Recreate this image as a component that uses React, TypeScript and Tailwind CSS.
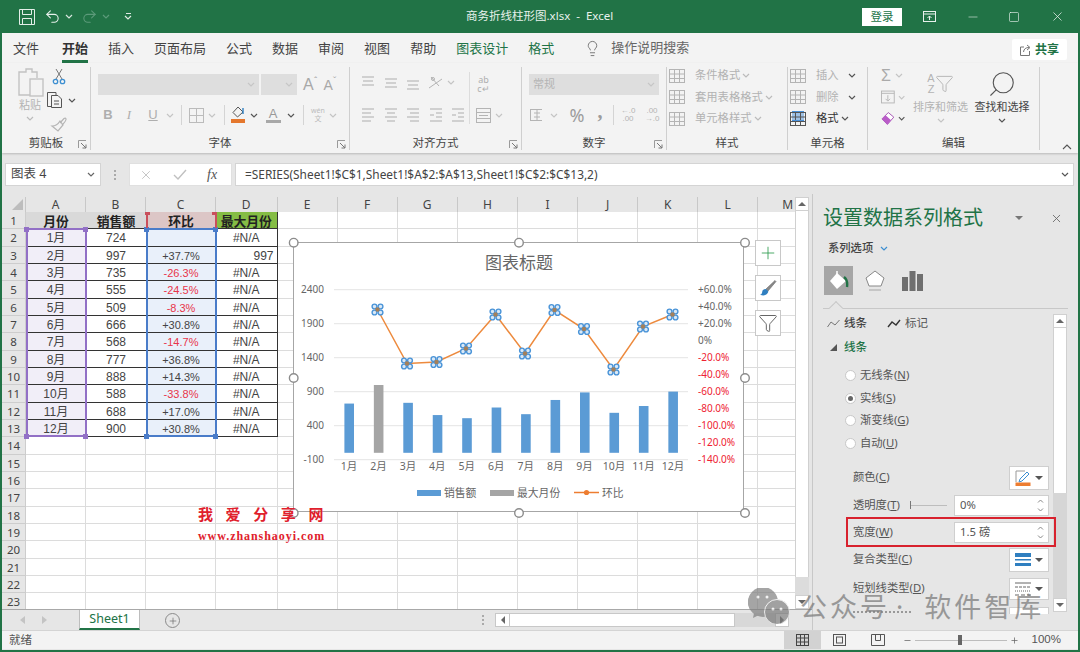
import React from 'react';
import { Undo2, Redo2, Lightbulb, X, Minus, Square, Plus, Filter, Search } from 'lucide-react';

const TABS = ['文件', '开始', '插入', '页面布局', '公式', '数据', '审阅', '视图', '帮助'];

const COLS = [
  'w-[60px]', 'w-[60px]', 'w-[70px]', 'w-[61.5px]', 'w-[60.1px]', 'w-[60.1px]', 'w-[60.1px]',
  'w-[60.1px]', 'w-[60.1px]', 'w-[60.1px]', 'w-[60.1px]', 'w-[60.1px]', 'w-[60.1px]'
];
const LETTERS = ['A', 'B', 'C', 'D', 'E', 'F', 'G', 'H', 'I', 'J', 'K', 'L', 'M'];

const TABLE = [
  ['1月', '724', '', '#N/A'],
  ['2月', '997', '+37.7%', '997'],
  ['3月', '735', '-26.3%', '#N/A'],
  ['4月', '555', '-24.5%', '#N/A'],
  ['5月', '509', '-8.3%', '#N/A'],
  ['6月', '666', '+30.8%', '#N/A'],
  ['7月', '568', '-14.7%', '#N/A'],
  ['8月', '777', '+36.8%', '#N/A'],
  ['9月', '888', '+14.3%', '#N/A'],
  ['10月', '588', '-33.8%', '#N/A'],
  ['11月', '688', '+17.0%', '#N/A'],
  ['12月', '900', '+30.8%', '#N/A']
];

const SALES = [724, 997, 735, 555, 509, 666, 568, 777, 888, 588, 688, 900];
const MONTHS = ['1月', '2月', '3月', '4月', '5月', '6月', '7月', '8月', '9月', '10月', '11月', '12月'];
const LINE: [number, number][] = [
  [377.5, 308.5], [407, 362.5], [436.5, 361], [466, 347.5], [495.5, 313.5], [525, 352.5],
  [554.5, 309], [584, 328], [613.5, 368.5], [643, 325.5], [672.5, 313.5]
];
const RIGHT_AXIS = ['+60.0%', '+40.0%', '+20.0%', '0%', '-20.0%', '-40.0%', '-60.0%', '-80.0%', '-100.0%', '-120.0%', '-140.0%'];
const HANDLES: [number, number][] = [
  [293.7, 241.7], [519, 241.7], [745, 241.7], [293.7, 377], [745, 377], [293.7, 512], [519, 512], [745, 512]
];

const DIM = '#b4b4b4';

function Chev({ c = '#a8a8a8', className = '' }: { c?: string; className?: string }) {
  return (
    <svg width="8" height="5" viewBox="0 0 8 5" className={className}>
      <polyline points="1,1 4,4 7,1" fill="none" stroke={c} strokeWidth="1.2" />
    </svg>
  );
}

// lines for the alignment buttons, given as [x1, x2, y]
function Lines({ rows }: { rows: [number, number, number][] }) {
  return (
    <svg width="16" height="16" viewBox="0 0 16 16">
      {rows.map(([a, b, y], i) => (
        <line key={i} x1={a} x2={b} y1={y} y2={y} stroke="#adadad" strokeWidth="1" />
      ))}
    </svg>
  );
}

function Launcher() {
  return (
    <svg width="9" height="9" viewBox="0 0 9 9">
      <path d="M0.5 8V0.5H8" fill="none" stroke="#9a9a9a" />
      <path d="M3 3L8 8M8 4.5V8H4.5" fill="none" stroke="#777" />
    </svg>
  );
}

function Group({ width, label, launcher, children }: { width: string; label: string; launcher?: boolean; children: React.ReactNode }) {
  return (
    <div className={`${width} h-[83px] my-[4px] border-r border-[#cfcfcf] flex flex-col shrink-0`}>
      <div className="h-[71px] flex">{children}</div>
      <div className="h-[14px] flex items-center relative">
        <span className="w-full text-center text-[11.5px] leading-none text-[#444]">{label}</span>
        {launcher && (
          <span className="absolute right-[3px] top-[4px]">
            <Launcher />
          </span>
        )}
      </div>
    </div>
  );
}

function Dropdown({ width, text }: { width: string; text?: string }) {
  return (
    <div className={`${width} h-[21px] bg-[#dedede] flex items-center justify-between px-[4px]`}>
      <span className="text-[11px] text-[#b4b4b4]">{text}</span>
      <Chev c="#c6c6c6" />
    </div>
  );
}

function Sep({ className = '' }: { className?: string }) {
  return <div className={`w-px h-[20px] bg-[#d4d4d4] ${className}`} />;
}

function StyleRow({ label, icon, chevron = true }: { label: string; icon: React.ReactNode; chevron?: boolean }) {
  return (
    <div className="h-[21.5px] flex items-center">
      <span className="w-[18px] flex justify-center">{icon}</span>
      <span className="ml-[9px] text-[11.3px] text-[#b2b2b2] whitespace-nowrap">{label}</span>
      {chevron && <Chev c="#bbb" className="ml-[2px]" />}
    </div>
  );
}

function TableIcon({ c = DIM, accent }: { c?: string; accent?: string }) {
  return (
    <svg width="16" height="16" viewBox="0 0 16 16">
      {accent && <rect x="2" y="0.5" width="12" height="9" fill={accent} opacity="0.5" />}
      <rect x="0.5" y="1.5" width="15" height="13" fill="none" stroke={c} />
      <path d="M0.5 6H15.5M0.5 10.5H15.5M5.5 1.5V14.5M10.5 1.5V14.5" stroke={c} fill="none" />
      {accent && <path d="M2 0.5H14M2 9.5H14" stroke={accent} />}
    </svg>
  );
}

function Ribbon() {
  return (
    <div className="h-[90px] bg-[#f3f3f3] flex shadow-[0_1px_2px_rgba(0,0,0,0.2)] relative z-10">
      <Group width="w-[89px]" label="剪贴板" launcher>
        <div className="w-[43px] pl-[13px] flex flex-col items-center">
          <svg width="27" height="30" viewBox="0 0 27 30" fill="none" stroke="#c2c2c2" strokeWidth="1.4">
            <path d="M4 5H9V2H15V5H20V11" />
            <path d="M13 28H2V5H4" />
            <rect x="13" y="12" width="13" height="17" fill="#f3f3f3" />
          </svg>
          <span className="text-[11px] leading-none mt-[2px] text-[#b4b4b4] whitespace-nowrap">粘贴</span>
          <Chev c="#bbb" className="mt-[6px]" />
        </div>
        <div className="ml-[2px] flex flex-col items-start pt-[1px]">
          <svg width="16" height="17" viewBox="0 0 16 17" className="ml-[4px]" fill="none">
            <path d="M5 1L11 11M11 1L5 11" stroke="#777" />
            <circle cx="4.5" cy="13.5" r="2.2" stroke="#3d8fd1" strokeWidth="1.3" />
            <circle cx="11.5" cy="13.5" r="2.2" stroke="#3d8fd1" strokeWidth="1.3" />
          </svg>
          <div className="flex items-center mt-[7px]">
            <svg width="17" height="16" viewBox="0 0 17 16" fill="none" stroke="#555">
              <path d="M4 14.5H0.5V0.5H9V3" />
              <path d="M4.5 3.5H11L14.5 7V15.5H4.5Z" />
              <path d="M7 9H12M7 12H12" />
            </svg>
            <Chev c="#555" className="ml-[4px]" />
          </div>
          <svg width="18" height="16" viewBox="0 0 18 16" className="ml-[3px] mt-[8px]" fill="none" stroke="#b4b4b4" strokeWidth="1.2">
            <path d="M10 7L14 2.5Q15.5 1.5 16 3T12 9" />
            <path d="M10 5L13 9L8 15L2 10Q7 10 10 5Z" />
          </svg>
        </div>
      </Group>

      <Group width="w-[259px]" label="字体" launcher>
        <div className="pl-[7px] pt-[7px] flex flex-col">
          <div className="flex items-center h-[21px]">
            <Dropdown width="w-[161px]" />
            <Dropdown width="w-[36px] ml-[2px]" />
            <span className="ml-[6px] text-[16px] leading-none text-[#a8a8a8] font-['Liberation_Sans',sans-serif]">A</span>
            <span className="text-[9px] leading-none text-[#a8a8a8] -mt-[8px]">ˆ</span>
            <span className="ml-[6px] text-[14px] leading-none text-[#a8a8a8] font-['Liberation_Sans',sans-serif]">A</span>
            <span className="text-[9px] leading-none text-[#a8a8a8] -mt-[8px]">ˇ</span>
          </div>
          <div className="flex items-center h-[18px] mt-[11px] text-[#aeaeae]">
            <span className="w-[20px] text-center text-[13px] font-bold font-['Liberation_Sans',sans-serif]">B</span>
            <span className="w-[22px] text-center text-[13px] italic font-['Liberation_Serif',serif]">I</span>
            <span className="w-[26px] text-center text-[13px] underline font-['Liberation_Sans',sans-serif]">U</span>
            <span className="w-[8px] flex justify-center"><Chev c="#c4c4c4" /></span>
            <span className="w-[14px] flex justify-center"><Sep /></span>
            <span className="w-[16px] flex justify-center">
              <svg width="15" height="15" viewBox="0 0 15 15" fill="none" stroke="#bbb">
                <rect x="0.5" y="0.5" width="14" height="14" />
                <path d="M7.5 0.5V14.5M0.5 7.5H14.5" />
              </svg>
            </span>
            <span className="w-[16px] flex justify-center"><Chev c="#c4c4c4" /></span>
            <span className="w-[8px] flex justify-center"><Sep /></span>
            <span className="w-[20px] flex justify-center">
              <svg width="16" height="18" viewBox="0 0 16 18">
                <path d="M8 1L13 6L7.5 11L3 6.5Z" fill="none" stroke="#555" />
                <path d="M13 2V8" stroke="#2f7fc0" strokeWidth="1.4" />
                <rect x="1" y="13" width="14" height="4" fill="#e4772d" />
              </svg>
            </span>
            <span className="w-[12px] flex justify-center"><Chev c="#555" /></span>
            <span className="w-[26px] flex flex-col items-center">
              <span className="text-[13px] leading-[13px] text-[#999] font-['Liberation_Sans',sans-serif]">A</span>
              <span className="w-[15px] h-[3px] bg-[#a8a8a8]" />
            </span>
            <span className="w-[10px] flex justify-center"><Chev c="#555" /></span>
            <span className="w-[14px] flex justify-center"><Sep /></span>
            <span className="w-[16px] flex flex-col items-center text-[7px] leading-[8px] text-[#bbb]">
              <span>wén</span>
              <span>文</span>
            </span>
            <span className="w-[14px] flex justify-center"><Chev c="#c4c4c4" /></span>
          </div>
        </div>
      </Group>

      <Group width="w-[172px]" label="对齐方式" launcher>
        <div className="pl-[7px] pt-[5px] flex flex-col">
          <div className="flex items-center h-[21px]">
            <span className="w-[22.5px] flex justify-center"><Lines rows={[[2, 14, 2], [3, 13, 6], [2, 14, 10]]} /></span>
            <span className="w-[22.5px] flex justify-center"><Lines rows={[[2, 14, 4], [3, 13, 8], [2, 14, 12]]} /></span>
            <span className="w-[22.5px] flex justify-center"><Lines rows={[[2, 14, 6], [3, 13, 10], [2, 14, 14]]} /></span>
            <span className="w-[22.5px] flex justify-center">
              <svg width="18" height="16" viewBox="0 0 18 16" fill="none" stroke="#b4b4b4">
                <path d="M2 13L15 4M4 2L12 11" />
                <circle cx="6" cy="4" r="1.5" />
              </svg>
            </span>
            <Chev c="#c4c4c4" />
          </div>
          <div className="flex items-center h-[18px] mt-[13px]">
            <span className="w-[22.5px] flex justify-center"><Lines rows={[[2, 14, 2], [2, 11, 6], [2, 14, 10], [2, 11, 14]]} /></span>
            <span className="w-[22.5px] flex justify-center"><Lines rows={[[2, 14, 2], [4, 12, 6], [2, 14, 10], [4, 12, 14]]} /></span>
            <span className="w-[22.5px] flex justify-center"><Lines rows={[[2, 14, 2], [5, 14, 6], [2, 14, 10], [5, 14, 14]]} /></span>
            <span className="w-[22.5px] flex justify-center"><Lines rows={[[2, 14, 2], [8, 14, 6], [2, 6, 8], [8, 14, 10], [2, 14, 14]]} /></span>
            <span className="w-[22.5px] flex justify-center"><Lines rows={[[2, 14, 2], [8, 14, 6], [2, 6, 8], [8, 14, 10], [2, 14, 14]]} /></span>
          </div>
        </div>
        <div className="ml-[-1px] mt-[5px] w-px h-[52px] bg-[#dcdcdc]" />
        <div className="ml-[6px] pt-[8px] flex flex-col">
          <span className="h-[21px] w-[16px] flex flex-col items-center text-[9px] leading-[9px] text-[#aeaeae]">
            <span>ab</span>
            <span>c↵</span>
          </span>
          <span className="flex items-center h-[18px] mt-[10px]">
            <svg width="16" height="15" viewBox="0 0 16 15" fill="none" stroke="#b4b4b4">
              <rect x="0.5" y="0.5" width="14" height="14" />
              <path d="M0.5 4.5H14.5M0.5 10.5H14.5M3 7.5H12" />
            </svg>
            <Chev c="#c4c4c4" className="ml-[3px]" />
          </span>
        </div>
      </Group>

      <Group width="w-[145px]" label="数字" launcher>
        <div className="pl-[7px] pt-[7px] flex flex-col">
          <Dropdown width="w-[130px]" text="常规" />
          <div className="flex items-center h-[18px] mt-[11px]">
            <span className="w-[14px] flex justify-center">
              <svg width="12" height="16" viewBox="0 0 12 16" fill="none" stroke="#b4b4b4">
                <rect x="0.5" y="2.5" width="13" height="11" />
                <path d="M4 6H10M4 10H10M7 2V14" />
              </svg>
            </span>
            <span className="w-[20px] flex justify-center ml-[1px]"><Chev c="#c4c4c4" /></span>
            <span className="w-[26px] text-center text-[18px] leading-none text-[#9c9c9c]">%</span>
            <span className="w-[20px] text-center text-[20px] font-bold leading-none text-[#9c9c9c] font-['Liberation_Serif',serif] -mt-[8px]">,</span>
            <span className="w-[6px] flex justify-center"><Sep /></span>
            <span className="w-[24px] text-center text-[8px] leading-[8px] text-[#b4b4b4] font-['Liberation_Sans',sans-serif]">←.0<br />.00</span>
            <span className="w-[24px] text-center text-[8px] leading-[8px] text-[#b4b4b4] font-['Liberation_Sans',sans-serif]">.00<br />→.0</span>
          </div>
        </div>
      </Group>

      <Group width="w-[121px]" label="样式">
        <div className="pl-[1px] -mt-[2px] flex flex-col">
          <StyleRow label="条件格式" icon={<TableIcon />} />
          <StyleRow label="套用表格格式" icon={<TableIcon />} />
          <StyleRow label="单元格样式" icon={<TableIcon />} />
        </div>
      </Group>

      <Group width="w-[80px]" label="单元格">
        <div className="pl-[1px] -mt-[2px] flex flex-col">
          <div className="h-[21.5px] flex items-center">
            <span className="w-[18px] flex justify-center"><TableIcon /></span>
            <span className="ml-[9px] text-[11.3px] text-[#b2b2b2]">插入</span>
            <Chev c="#555" className="ml-[9px]" />
          </div>
          <div className="h-[21.5px] flex items-center">
            <span className="w-[18px] flex justify-center"><TableIcon /></span>
            <span className="ml-[9px] text-[11.3px] text-[#b2b2b2]">删除</span>
            <Chev c="#555" className="ml-[9px]" />
          </div>
          <div className="h-[21.5px] flex items-center">
            <span className="w-[18px] flex justify-center"><TableIcon c="#555" accent="#4a90d9" /></span>
            <span className="ml-[9px] text-[11.3px] text-[#333]">格式</span>
            <Chev c="#555" className="ml-[2px]" />
          </div>
        </div>
      </Group>

      <Group width="w-[172px]" label="编辑">
        <div className="w-[37px] pl-[13px] -mt-[2px] flex flex-col shrink-0">
          <div className="h-[21.5px] flex items-center">
            <span className="text-[16px] leading-none text-[#aaa] font-['Liberation_Sans',sans-serif]">Σ</span>
            <Chev c="#c4c4c4" className="ml-[4px]" />
          </div>
          <div className="h-[21.5px] flex items-center">
            <svg width="15" height="14" viewBox="0 0 15 14" fill="none" stroke="#b4b4b4">
              <rect x="0.5" y="0.5" width="14" height="13" />
              <path d="M0.5 3H14.5M7.5 5V11M5 9L7.5 11.5L10 9" />
            </svg>
            <Chev c="#c4c4c4" className="ml-[3px]" />
          </div>
          <div className="h-[21.5px] flex items-center">
            <svg width="15" height="15" viewBox="0 0 15 15">
              <path d="M1 8L8 1L14 6L7 14Z" fill="#fff" stroke="#a24bb0" />
              <path d="M1 8L5 4L11 9.5L7 14Z" fill="#b95cc8" />
            </svg>
            <Chev c="#555" className="ml-[3px]" />
          </div>
        </div>
        <div className="w-[63px] ml-[4px] flex flex-col items-center pt-[3px]">
          <span className="h-[27px] flex items-center">
            <span className="text-[11px] leading-[11px] text-[#b4b4b4] text-center font-['Liberation_Sans',sans-serif]">A<br />Z</span>
            <Filter size={19} strokeWidth={1.2} color="#b4b4b4" />
          </span>
          <span className="text-[11px] leading-none mt-[4px] text-[#b4b4b4] whitespace-nowrap">排序和筛选</span>
          <Chev c="#c4c4c4" className="mt-[6px]" />
        </div>
        <div className="w-[60px] flex flex-col items-center pt-[3px]">
          <span className="h-[27px] flex items-center">
            <Search size={30} strokeWidth={0.9} color="#555" className="-scale-x-100" />
          </span>
          <span className="text-[11px] leading-none mt-[4px] text-[#444] whitespace-nowrap">查找和选择</span>
          <Chev c="#555" className="mt-[6px]" />
        </div>
      </Group>

      <div className="flex-1 flex items-end justify-end pr-[6px] pb-[3px]">
        <svg width="10" height="6" viewBox="0 0 10 6">
          <polyline points="1,5 5,1 9,5" fill="none" stroke="#555" strokeWidth="1.1" />
        </svg>
      </div>
    </div>
  );
}

function TitleBar() {
  return (
    <div className="h-[33px] bg-[#217346] flex items-center relative text-white">
      <svg width="16" height="16" viewBox="0 0 16 16" fill="none" stroke="#e4efe9" className="ml-[17px]">
        <path d="M0.5 0.5H15.5V15.5H0.5Z" />
        <path d="M3.5 0.5V5.5H12.5V0.5M3.5 15.5V9.5H12.5V15.5" />
      </svg>
      <Undo2 size={17} color="#e8f1ec" strokeWidth={1.5} className="ml-[9px]" />
      <Chev c="#d8e6de" className="ml-[4px]" />
      <Redo2 size={17} color="#5c9a7a" strokeWidth={1.5} className="ml-[8px]" />
      <Chev c="#5c9a7a" className="ml-[4px]" />
      <span className="ml-[14px] flex flex-col items-center gap-[1px]">
        <span className="w-[5px] h-px bg-[#dfeae4]" />
        <Chev c="#dfeae4" />
      </span>
      <span className="absolute left-[464px] top-[8px] text-[11.5px] leading-[16px] text-[#e8f1ec] whitespace-nowrap">
        商务折线柱形图.xlsx&nbsp;&nbsp;-&nbsp;&nbsp;Excel
      </span>
      <div className="ml-auto flex items-center pr-[13px]">
        <span className="w-[40px] h-[18px] bg-white text-[#217346] text-[11.5px] flex items-center justify-center">登录</span>
        <svg width="13" height="11" viewBox="0 0 13 11" fill="none" stroke="#e8f1ec" className="ml-[21px]">
          <rect x="0.5" y="0.5" width="12" height="10" />
          <path d="M0.5 3H12.5M6.5 9V5M4.5 7L6.5 5L8.5 7" />
        </svg>
        <Minus size={14} color="#e8f1ec" strokeWidth={1} className="ml-[30px]" />
        <Square size={12} color="#e8f1ec" strokeWidth={1.3} className="ml-[28px]" />
        <X size={15} color="#e8f1ec" strokeWidth={1.2} className="ml-[30px]" />
      </div>
    </div>
  );
}

function TabRow() {
  return (
    <div className="h-[30px] bg-[#f3f3f3] flex items-center pl-[11px] text-[13px] text-[#444]">
      <div className="flex gap-[20px]">
        {TABS.map((t) => (
          <span key={t} className={`relative leading-[18px] ${t === '开始' ? 'font-bold text-[#333] ml-[3px]' : ''}`}>
            {t}
            {t === '开始' && <span className="absolute left-0 right-0 top-[21px] h-[3px] bg-[#217346]" />}
          </span>
        ))}
        <span className="leading-[18px] text-[#217346]">图表设计</span>
        <span className="leading-[18px] text-[#217346]">格式</span>
      </div>
      <Lightbulb size={17} color="#666" strokeWidth={1.2} className="ml-[30px]" />
      <span className="ml-[10px] text-[#666]">操作说明搜索</span>
      <div className="ml-auto mr-[11px] mt-[3px] w-[55px] h-[21px] bg-white flex items-center justify-center gap-[3px] rounded-[2px]">
        <svg width="12" height="12" viewBox="0 0 12 12" fill="none" stroke="#777">
          <path d="M4 3H0.5V11.5H9.5V7" />
          <path d="M3.5 8Q4 3.5 9 3.5M7 1L10 3.5L7 6" />
        </svg>
        <span className="text-[12px] font-bold text-[#217346] leading-none">共享</span>
      </div>
    </div>
  );
}

function FormulaBar() {
  return (
    <div className="h-[41px] bg-[#e6e6e6] flex items-start pt-[10px] pl-[3px] text-[#444]">
      <div className="w-[96px] h-[23px] bg-white border border-[#d4d4d4] flex items-center justify-between pl-[5px] pr-[5px]">
        <span className="text-[12.5px]">图表 4</span>
        <Chev c="#666" />
      </div>
      <div className="w-[28px] h-[23px] flex flex-col items-center justify-center gap-[2px]">
        <span className="w-[2px] h-[2px] bg-[#aaa]" />
        <span className="w-[2px] h-[2px] bg-[#aaa]" />
        <span className="w-[2px] h-[2px] bg-[#aaa]" />
      </div>
      <div className="w-[103px] h-[23px] bg-white border border-[#e0e0e0] flex items-center text-[#b4b4b4]">
        <X size={14} strokeWidth={1.3} className="ml-[9px]" />
        <svg width="14" height="12" viewBox="0 0 14 12" fill="none" stroke="#c0c0c0" strokeWidth="1.4" className="ml-[20px]">
          <path d="M1 6L5 10L13 1" />
        </svg>
        <span className="ml-[20px] text-[14px] italic font-['Liberation_Serif',serif] text-[#555]">fx</span>
      </div>
      <div className="ml-[3px] w-[839px] h-[23px] bg-white border border-[#d4d4d4] flex items-center justify-between pl-[9px] pr-[4px]">
        <span className="text-[11.9px] text-[#444] whitespace-nowrap">=SERIES(Sheet1!$C$1,Sheet1!$A$2:$A$13,Sheet1!$C$2:$C$13,2)</span>
        <Chev c="#555" />
      </div>
    </div>
  );
}

function Chart() {
  return (
    <div className="absolute left-[290.7px] top-[47.7px] w-[451.3px] h-[270.3px] bg-white border-[1.5px] border-[#a6a6a6]">
      <svg width="451" height="270" viewBox="293 241 451 270" className="block overflow-visible absolute -left-[1px] -top-[1px]">
        {[288.7, 322.7, 356.7, 390.7, 424.7, 458.7].map((y) => (
          <line key={y} x1="334" x2="688" y1={y} y2={y} stroke="#e4e4e4" />
        ))}
        {['2400', '1900', '1400', '900', '400', '-100'].map((t, i) => (
          <text key={t} x="324" y={288.7 + i * 34 + 3.5} textAnchor="end" fontSize="10" fill="#666">{t}</text>
        ))}
        {RIGHT_AXIS.map((t, i) => (
          <text key={t} x="698" y={288.7 + i * 17 + 3.5} fontSize="10" fill={i > 3 ? '#ee2233' : '#666'}>{t}</text>
        ))}
        {SALES.map((v, i) => (
          <rect
            key={i}
            x={349.2 + i * 29.45 - 4.8}
            y={451.8 - v * 0.068}
            width="9.6"
            height={v * 0.068}
            fill={i === 1 ? '#a5a5a5' : '#5b9bd5'}
          />
        ))}
        {MONTHS.map((m, i) => (
          <text key={m} x={349 + i * 29.45} y="469" textAnchor="middle" fontSize="10.5" fill="#666">{m}</text>
        ))}
        <text x="519" y="267.5" textAnchor="middle" fontSize="17" fill="#666">图表标题</text>
        <polyline points={LINE.map((p) => p.join(',')).join(' ')} fill="none" stroke="#ed8a3d" strokeWidth="1.5" />
        {LINE.map(([x, y], i) => (
          <g key={i}>
            {[[-3, -3], [3, -3], [-3, 3], [3, 3]].map(([dx, dy], j) => (
              <circle key={j} cx={x + dx} cy={y + dy} r="2.4" fill="#dbe9f6" stroke="#4a94d8" strokeWidth="1.4" />
            ))}
            <circle cx={x} cy={y} r="2.2" fill="#a5805a" />
          </g>
        ))}
        <rect x="417" y="489" width="24" height="6" fill="#5b9bd5" />
        <text x="444" y="495.5" fontSize="10.8" fill="#666">销售额</text>
        <rect x="490" y="489" width="24" height="6" fill="#a5a5a5" />
        <text x="517" y="495.5" fontSize="10.8" fill="#666">最大月份</text>
        <line x1="574" x2="599" y1="491.5" y2="491.5" stroke="#ed7d31" strokeWidth="1.5" />
        <circle cx="586.5" cy="491.5" r="2.6" fill="#ed7d31" />
        <text x="602" y="495.5" fontSize="10.8" fill="#666">环比</text>
        {HANDLES.map(([x, y], i) => (
          <circle key={i} cx={x} cy={y} r="4.3" fill="#fff" stroke="#8c8c8c" strokeWidth="1.4" />
        ))}
      </svg>
    </div>
  );
}

function ChartButtons() {
  const cls = 'w-[26px] h-[26px] bg-white border border-[#c8c8c8] flex items-center justify-center';
  return (
    <div className="absolute left-[753px] top-[46px] flex flex-col gap-[9px]">
      <div className={cls}>
        <Plus size={20} strokeWidth={1} color="#2a9a4a" />
      </div>
      <div className={cls}>
        <svg width="18" height="18" viewBox="0 0 18 18" fill="none">
          <path d="M7 10L16 1.5L17 2.5L9 12Z" fill="#888" stroke="#666" strokeWidth="0.6" />
          <path d="M7 10Q3 10 3 14Q2.5 15.5 1 15.5Q5 17.5 8 15Q10 12.5 9 12Z" fill="#2f7fc0" />
        </svg>
      </div>
      <div className={cls}>
        <Filter size={20} strokeWidth={1.2} color="#666" />
      </div>
    </div>
  );
}

function Selection({ className, color }: { className: string; color: string }) {
  // range finder box with its four corner squares
  const h = 'absolute w-[5px] h-[5px]';
  return (
    <div className={`absolute border-2 pointer-events-none ${className}`}>
      <span className={`${h} -left-[3.5px] -top-[3.5px] ${color}`} />
      <span className={`${h} -right-[3.5px] -top-[3.5px] ${color}`} />
      <span className={`${h} -left-[3.5px] -bottom-[3.5px] ${color}`} />
      <span className={`${h} -right-[3.5px] -bottom-[3.5px] ${color}`} />
    </div>
  );
}

function Sheet() {
  const HEAD = ['月份', '销售额', '环比', '最大月份'];
  const HEAD_BG = ['bg-[#d9d9d9]', 'bg-[#d9d9d9]', 'bg-[#dcc6c6]', 'bg-[#85bd45]'];
  const TINT = ['bg-[#f1eef8]', 'bg-white', 'bg-[#e9f0fa]', 'bg-white'];
  return (
    <div className="relative w-[793px] h-[415px] overflow-hidden bg-white">
      <div className="h-[18px] bg-[#e6e6e6] flex items-end">
        <div className="w-[24px] h-[15px] shrink-0 relative border-r border-[#c8c8c8]">
          <span className="absolute right-[2px] bottom-[2px] w-0 h-0 border-l-[11px] border-l-transparent border-b-[11px] border-b-[#bdbdbd]" />
        </div>
        {LETTERS.map((l, i) => (
          <div key={l} className={`${COLS[i]} h-[15px] shrink-0 border-r border-[#c8c8c8] text-center text-[12px] leading-[15px] text-[#444]`}>
            {l}
          </div>
        ))}
      </div>
      {Array.from({ length: 23 }, (_, r) => (
        <div key={r} className="flex h-[17.33px]">
          <div className="w-[24px] shrink-0 bg-[#e6e6e6] border-r border-b border-[#cdcdcd] text-[11.5px] pt-[1px] leading-[16px] text-center text-[#444]">
            {r + 1}
          </div>
          {COLS.map((c, i) => {
            if (i < 4 && r === 0) {
              return (
                <div key={i} className={`${c} shrink-0 ${HEAD_BG[i]} border-b border-[#333] ${i === 3 ? 'border-r' : ''} text-center text-[12.8px] font-bold leading-[18px] text-[#222]`}>
                  {HEAD[i]}
                </div>
              );
            }
            if (i < 4 && r < 13) {
              const v = TABLE[r - 1][i];
              const neg = i === 2 && v.startsWith('-');
              const size = i === 2 ? 'text-[11px]' : 'text-[12px]';
              const align = v === '997' && i === 3 ? 'text-right pr-[3px]' : 'text-center';
              return (
                <div key={i} className={`${c} shrink-0 ${TINT[i]} border-b border-[#333] ${i === 3 ? 'border-r' : ''} ${size} ${align} pt-[1px] leading-[17px] ${neg ? 'text-[#e8354a]' : 'text-[#444]'} font-['Liberation_Sans','Noto_Sans_CJK_SC',sans-serif]`}>
                  {v}
                </div>
              );
            }
            return <div key={i} className={`${c} shrink-0 border-r border-b border-[#dcdcdc]`} />;
          })}
        </div>
      ))}

      <Selection className="left-[23.5px] top-[34px] w-[61px] h-[209px] border-[#9270c6]" color="bg-[#9270c6]" />
      <Selection className="left-[143.5px] top-[34px] w-[71px] h-[209px] border-[#4a7cc9]" color="bg-[#4a7cc9]" />
      <div className="absolute left-[143.5px] top-[18px] w-[71px] h-[16px] border-x-2 border-[#c9505c]">
        <span className="absolute -left-[2.5px] top-0 w-[5px] h-[3px] bg-[#c9505c]" />
        <span className="absolute -right-[2.5px] top-0 w-[5px] h-[3px] bg-[#c9505c]" />
      </div>

      <Chart />
      <ChartButtons />

      <div className="absolute left-[196px] top-[311px] text-[15px] leading-[20px] font-bold text-[#e0202c] tracking-[12.6px] whitespace-nowrap font-['Liberation_Serif','Noto_Sans_CJK_SC',serif]">
        我爱分享网
      </div>
      <div className="absolute left-[196px] top-[335px] text-[12px] leading-[15px] font-bold text-[#e0202c] tracking-[0.95px] whitespace-nowrap font-['Liberation_Serif',serif]">
        www.zhanshaoyi.com
      </div>
    </div>
  );
}

function ScrollBtn({ down }: { down?: boolean }) {
  return (
    <div className="h-[14px] bg-white border border-[#d0d0d0] flex items-center justify-center shrink-0">
      <span className={`w-0 h-0 border-x-[4px] border-x-transparent ${down ? 'border-t-[4px] border-t-[#666]' : 'border-b-[4px] border-b-[#666]'}`} />
    </div>
  );
}

function SheetScroll() {
  return (
    <div className="w-[14px] h-[415px] pt-[3px] flex flex-col bg-[#e6e6e6]">
      <ScrollBtn />
      <div className="h-[366px] bg-white border-x border-[#d0d0d0]" />
      <div className="flex-1 bg-[#dcdcdc]" />
      <ScrollBtn down />
    </div>
  );
}

function TabBar() {
  return (
    <div className="h-[21px] bg-[#e6e6e6] border-t border-[#a8a8a8] flex items-start text-[#aaa]">
      <span className="ml-[18px] mt-[6px] w-0 h-0 border-y-[4px] border-y-transparent border-r-[5px] border-r-[#c4c4c4]" />
      <span className="ml-[17px] mt-[6px] w-0 h-0 border-y-[4px] border-y-transparent border-l-[5px] border-l-[#c4c4c4]" />
      <div className="ml-[32px] w-[61px] h-[20px] bg-white border-x border-[#bdbdbd] border-b-2 border-b-[#217346] text-center text-[12.5px] leading-[17px] text-[#217346]">
        Sheet1
      </div>
      <span className="ml-[25px] mt-[3px] w-[15px] h-[15px] rounded-full border border-[#8a8a8a] flex items-center justify-center">
        <Plus size={10} color="#666" strokeWidth={1.6} />
      </span>
      <div className="ml-[302px] mt-[5px] flex flex-col gap-[2px]">
        <span className="w-[2px] h-[2px] bg-[#aaa]" />
        <span className="w-[2px] h-[2px] bg-[#aaa]" />
        <span className="w-[2px] h-[2px] bg-[#aaa]" />
      </div>
      <div className="ml-[11px] mt-[3px] h-[14px] w-[294px] flex bg-[#d8d8d8]">
        <span className="w-[15px] bg-white border border-[#c8c8c8] flex items-center justify-center">
          <span className="w-0 h-0 border-y-[4px] border-y-transparent border-r-[4px] border-r-[#666]" />
        </span>
        <span className="w-[225px] bg-white border-y border-r border-[#c8c8c8]" />
        <span className="flex-1" />
        <span className="w-[14px] bg-white border border-[#c8c8c8] flex items-center justify-center">
          <span className="w-0 h-0 border-y-[4px] border-y-transparent border-l-[4px] border-l-[#666]" />
        </span>
      </div>
    </div>
  );
}

function Radio({ label, k, checked }: { label: string; k: string; checked?: boolean }) {
  return (
    <div className="h-[22.7px] flex items-center pl-[22px]">
      <span className="w-[11px] h-[11px] rounded-full bg-white border border-[#c8c8c8] flex items-center justify-center">
        {checked && <span className="w-[5px] h-[5px] rounded-full bg-[#666]" />}
      </span>
      <span className="ml-[4px] text-[11.3px] text-[#555]">
        {label}(<span className="underline">{k}</span>)
      </span>
    </div>
  );
}

function Spin() {
  return (
    <span className="flex flex-col items-center gap-[5px] pr-[1px]">
      <svg width="7" height="4" viewBox="0 0 7 4"><polyline points="1,3.5 3.5,1 6,3.5" fill="none" stroke="#888" /></svg>
      <svg width="7" height="4" viewBox="0 0 7 4"><polyline points="1,0.5 3.5,3 6,0.5" fill="none" stroke="#888" /></svg>
    </span>
  );
}

function PickButton({ children, h = 'h-[24px]' }: { children: React.ReactNode; h?: string }) {
  return (
    <span className={`w-[40px] ${h} bg-white border border-[#cfcfcf] flex items-center justify-center gap-[4px] shrink-0`}>
      {children}
      <span className="w-0 h-0 border-x-[4px] border-x-transparent border-t-[4px] border-t-[#555]" />
    </span>
  );
}

function Pane() {
  return (
    <div className="relative w-[266px] h-[436px] bg-[#e6e6e6] text-[#444] border-l border-[#c8c8c8]">
      <div className="h-[48px] pl-[10px] pr-[15px] flex items-center">
        <span className="text-[20px] text-[#217346] leading-none">设置数据系列格式</span>
        <span className="ml-auto w-0 h-0 border-x-[4px] border-x-transparent border-t-[4px] border-t-[#777]" />
        <X size={13} color="#666" strokeWidth={1.6} className="ml-[27px]" />
      </div>
      <div className="h-[12px] pl-[15px] flex items-center">
        <span className="text-[11.3px] leading-none font-medium text-[#444]">系列选项</span>
        <Chev c="#3d8fd1" className="ml-[7px]" />
      </div>
      <div className="h-[29px] mt-[12px] ml-[11px] flex items-center">
        <span className="w-[29px] h-[29px] bg-[#a6a6a6] flex items-center justify-center">
          <svg width="21" height="21" viewBox="0 0 21 21">
            <path d="M9 3L18 11L9 19L2 11Z" fill="#fff" />
            <path d="M9 1V10" stroke="#fff" strokeWidth="1.5" />
            <path d="M16 7Q20 10 19 17" stroke="#217346" strokeWidth="2.4" fill="none" />
          </svg>
        </span>
        <svg width="20" height="22" viewBox="0 0 20 22" className="ml-[12px]">
          <path d="M10 1L19 8L16 16H4L1 8Z" fill="#fff" stroke="#888" />
          <path d="M4 20H16" stroke="#bbb" strokeWidth="1.5" />
        </svg>
        <svg width="21" height="20" viewBox="0 0 21 20" className="ml-[17px]">
          <rect x="0" y="6" width="6" height="14" fill="#6f6f6f" />
          <rect x="7.5" y="0" width="6" height="20" fill="#6f6f6f" />
          <rect x="15" y="3" width="6" height="17" fill="#6f6f6f" />
        </svg>
      </div>
      <div className="mt-[13px] ml-[10px] mr-[10px] h-px bg-[#c8c8c8] relative">
        <span className="absolute left-[8px] -top-[5px] w-[10px] h-[10px] rotate-45 bg-[#e6e6e6] border-l border-t border-[#c8c8c8]" />
      </div>
      <div className="flex h-[305px] overflow-hidden">
        <div className="w-[240px] pl-[10px]">
          <div className="h-[28px] flex items-center pl-[4px] text-[11.5px]">
            <svg width="13" height="9" viewBox="0 0 13 9" fill="none" stroke="#777"><path d="M0.5 8L4 3L8 6L12.5 1" /></svg>
            <span className="ml-[4px] font-medium">线条</span>
            <svg width="14" height="9" viewBox="0 0 14 9" fill="none" stroke="#333" strokeWidth="1.4" className="ml-[20px]">
              <path d="M1 8L5 3L9 6L13 1" />
            </svg>
            <span className="ml-[4px] text-[#555]">标记</span>
          </div>
          <div className="h-[20px] flex items-center pl-[7px]">
            <span className="w-0 h-0 border-l-[7px] border-l-transparent border-b-[7px] border-b-[#555]" />
            <span className="ml-[7px] text-[11.5px] text-[#217346] font-medium">线条</span>
          </div>
          <div className="mt-[7px]">
            <Radio label="无线条" k="N" />
            <Radio label="实线" k="S" checked />
            <Radio label="渐变线" k="G" />
            <Radio label="自动" k="U" />
          </div>
          <div className="pl-[30px] pr-[4px] text-[11.3px] text-[#555]">
            <div className="mt-[11px] h-[24px] flex items-center justify-between">
              <span>颜色(<span className="underline">C</span>)</span>
              <PickButton>
                <svg width="16" height="16" viewBox="0 0 16 16" fill="none">
                  <path d="M1 1H10M1 1V12" stroke="#999" />
                  <path d="M5 9L12 2L14 4L7 11L4 12Z" stroke="#3d8fd1" fill="#fff" />
                  <rect x="0.5" y="12.5" width="15" height="3.5" fill="#ed7d31" />
                </svg>
              </PickButton>
            </div>
            <div className="mt-[5px] h-[21px] flex items-center">
              <span className="whitespace-nowrap">透明度(<span className="underline">T</span>)</span>
              <span className="ml-[10px] w-px h-[8px] bg-[#777]" />
              <span className="w-[36px] h-px bg-[#bdbdbd]" />
              <span className="ml-auto w-[95px] h-[21px] bg-white border border-[#cfcfcf] flex items-center justify-between pl-[5px] pr-[3px]">
                <span>0%</span>
                <Spin />
              </span>
            </div>
            <div className="mt-[6px] h-[21px] flex items-center relative">
              <span>宽度(<span className="underline">W</span>)</span>
              <span className="ml-auto w-[95px] h-[21px] bg-white border border-[#cfcfcf] flex items-center justify-between pl-[5px] pr-[3px]">
                <span>1.5 磅</span>
                <Spin />
              </span>
              <span className="absolute -left-[7px] -right-[7px] -top-[5px] -bottom-[4px] border-2 border-[#d8222e]" />
            </div>
            <div className="mt-[5px] h-[24px] flex items-center justify-between">
              <span>复合类型(<span className="underline">C</span>)</span>
              <PickButton>
                <svg width="16" height="14" viewBox="0 0 16 14">
                  <rect y="0" width="16" height="4" fill="#2f7fc0" />
                  <rect y="6" width="16" height="1.5" fill="#2f7fc0" />
                  <rect y="10" width="16" height="3" fill="#2f7fc0" />
                </svg>
              </PickButton>
            </div>
            <div className="mt-[6px] h-[22px] flex items-center justify-between">
              <span>短划线类型(<span className="underline">D</span>)</span>
              <PickButton h="h-[22px]">
                <svg width="16" height="14" viewBox="0 0 16 14" stroke="#666" fill="none">
                  <path d="M0 1H16" />
                  <path d="M0 5H16" strokeDasharray="3 1" />
                  <path d="M0 9H16" strokeDasharray="1 1" />
                  <path d="M0 13H16" strokeDasharray="4 2" />
                </svg>
              </PickButton>
            </div>
            {/* next row is scrolled out of view, only its top sliver shows */}
            <div className="mt-[7px] h-[24px] flex items-start justify-between">
              <span className="mt-[4px] w-[58px] border-t-2 border-dotted border-[#999]" />
              <span className="w-[40px] h-[24px] bg-white border border-[#cfcfcf]" />
            </div>
          </div>
        </div>
        <div className="w-[14px] mt-[5px] h-[298px] flex flex-col bg-[#d6d6d6]">
          <ScrollBtn />
          <div className="h-[165px] bg-white border-x border-[#d0d0d0]" />
          <div className="flex-1" />
          <ScrollBtn down />
        </div>
      </div>
    </div>
  );
}

function StatusBar() {
  return (
    <div className="h-[19px] bg-[#f3f3f3] border-t border-[#d4d4d4] flex items-center text-[#555]">
      <span className="ml-[7px] text-[11.5px]">就绪</span>
      <div className="ml-auto flex items-center h-full">
        <span className="w-[37px] h-full bg-[#d2d2d2] flex items-center justify-center">
          <svg width="13" height="12" viewBox="0 0 13 12" fill="none" stroke="#444">
            <rect x="0.5" y="0.5" width="12" height="11" />
            <path d="M0.5 4H12.5M0.5 8H12.5M4.5 0.5V11.5M8.5 0.5V11.5" />
          </svg>
        </span>
        <svg width="13" height="12" viewBox="0 0 13 12" fill="none" stroke="#555" className="ml-[12px]">
          <rect x="0.5" y="0.5" width="12" height="11" />
          <rect x="3.5" y="3" width="6" height="6" />
        </svg>
        <svg width="14" height="12" viewBox="0 0 14 12" fill="none" stroke="#555" className="ml-[25px]">
          <path d="M0.5 0.5H13.5V11.5H0.5ZM4.5 0.5V6.5H9.5V0.5" />
        </svg>
        <Minus size={9} color="#666" className="ml-[18px]" />
        <div className="ml-[3px] w-[92px] h-px bg-[#bdbdbd] relative">
          <span className="absolute left-[43px] -top-[5px] w-[4px] h-[10px] bg-[#666]" />
        </div>
        <Plus size={9} color="#666" className="ml-[3px]" />
        <span className="ml-[13px] mr-[17px] text-[11.5px] text-[#555] font-['Liberation_Sans',sans-serif]">100%</span>
      </div>
    </div>
  );
}

export default function App() {
  return (
    <div className="relative w-[1080px] h-[652px] overflow-hidden border-x-2 border-b-2 border-[#217346] bg-[#e6e6e6] font-['Noto_Sans','Noto_Sans_CJK_SC',sans-serif]">
      <TitleBar />
      <TabRow />
      <Ribbon />
      <FormulaBar />
      <div className="flex h-[436px]">
        <div className="w-[810px] flex flex-col">
          <div className="flex">
            <Sheet />
            <SheetScroll />
          </div>
          <TabBar />
        </div>
        <Pane />
      </div>
      <StatusBar />

      {/* 公众号 watermark on top of the screenshot */}
      <div className="absolute left-[743px] top-[588px] flex items-center pointer-events-none opacity-70">
        <svg width="48" height="36" viewBox="0 0 48 36">
          <path d="M18 1C8 1 3 8 3 14C3 19 6 23 9 25L8 30L14 27C18 28 22 28 24 27Z" fill="#7f7f7f" />
          <circle cx="18" cy="14" r="15" fill="#7f7f7f" />
          <circle cx="32" cy="24" r="12.5" fill="#7a7a7a" stroke="#eee" strokeWidth="1" />
          <circle cx="28" cy="21" r="1.5" fill="#eee" />
          <circle cx="36" cy="21" r="1.5" fill="#eee" />
          <circle cx="13" cy="9" r="1.5" fill="#eee" />
          <circle cx="22" cy="9" r="1.5" fill="#eee" />
        </svg>
        <span className="ml-[7px] text-[27px] leading-none text-[#777] tracking-[3px] whitespace-nowrap">公众号</span>
        <span className="ml-[6px] text-[27px] leading-none text-[#777]">·</span>
        <span className="ml-[21px] text-[27px] leading-none text-[#777] tracking-[3px] whitespace-nowrap">软件智库</span>
      </div>
    </div>
  );
}
